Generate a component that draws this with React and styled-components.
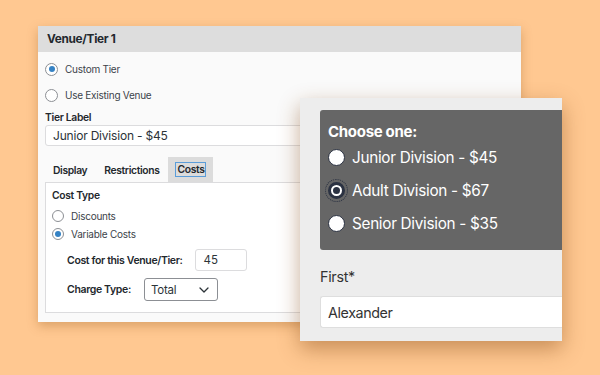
import React from "react"
import styled, { createGlobalStyle } from "styled-components"

const GlobalStyle = createGlobalStyle`
  html, body {
    margin: 0;
    padding: 0;
    background: #ffc891;
  }
  body {
    font-family: Inter, "Noto Sans", sans-serif;
    -webkit-font-smoothing: antialiased;
  }
`

const Stage = styled.div`
  position: relative;
  width: 600px;
  height: 375px;
  overflow: hidden;
  background: #ffc891;
`

/* ---------- admin window (back) ---------- */

const AdminWindow = styled.div`
  position: absolute;
  left: 38px;
  top: 26px;
  width: 483px;
  height: 296px;
  background: #fafafa;
  box-shadow: 0 4px 10px rgba(150, 90, 30, 0.35);
  display: flex;
  flex-direction: column;
`

const WindowHeader = styled.div`
  height: 26px;
  flex: none;
  display: flex;
  align-items: center;
  padding-left: 9px;
  background: #dddddd;
  color: #23282d;
  font-size: 11.8px;
  letter-spacing: -0.3px;
  font-weight: 700;
`

const WindowBody = styled.div`
  padding: 4px 7px 0;
  display: flex;
  flex-direction: column;
`

const RadioRow = styled.label`
  display: flex;
  align-items: center;
  gap: ${(p) => p.$gap || 7}px;
  height: ${(p) => p.$h || 26}px;
  margin-top: ${(p) => p.$mt || 0}px;
  color: #3c434a;
  font-size: 10px;
  letter-spacing: -0.25px;
`

const WpRadio = styled.span`
  width: ${(p) => p.$size}px;
  height: ${(p) => p.$size}px;
  box-sizing: border-box;
  border-radius: 50%;
  border: 1px solid #8c8f94;
  background: #fff;
  display: flex;
  align-items: center;
  justify-content: center;
  flex: none;

  &::after {
    content: "";
    display: ${(p) => (p.$checked ? "block" : "none")};
    width: 6px;
    height: 6px;
    border-radius: 50%;
    background: #3582c4;
  }
`

const FieldLabel = styled.div`
  margin-top: 2px;
  line-height: 14px;
  font-size: 10.3px;
  letter-spacing: -0.3px;
  font-weight: 600;
  color: #23282d;
`

const TextInput = styled.div`
  margin-top: 1px;
  height: 21px;
  box-sizing: border-box;
  border: 1px solid #dcdcde;
  border-radius: 3px;
  background: #fff;
  display: flex;
  align-items: center;
  padding-left: 7px;
  font-size: 12px;
  letter-spacing: -0.2px;
  color: #2c3338;
`

const Tabs = styled.div`
  margin-top: 11px;
  display: flex;
  gap: 1px;
`

const Tab = styled.div`
  height: 25px;
  padding: 0 8px;
  display: flex;
  align-items: center;
  font-size: 10.3px;
  letter-spacing: -0.35px;
  font-weight: 600;
  color: #23282d;
  background: ${(p) => (p.$active ? "#dcdcdc" : "transparent")};
`

const FocusText = styled.span`
  outline: 1px solid #5b9dd9;
  padding: 0 1px;
  line-height: 13px;
`

const TabPanel = styled.div`
  height: 131px;
  box-sizing: border-box;
  border: 1px solid #dcdcde;
  background: #fff;
  padding: 5px 6px 0;
  display: flex;
  flex-direction: column;
`

const SectionTitle = styled.div`
  line-height: 14px;
  font-size: 10.3px;
  letter-spacing: -0.3px;
  font-weight: 600;
  color: #23282d;
`

const FieldRow = styled.div`
  display: flex;
  align-items: center;
  gap: ${(p) => p.$gap}px;
  margin-top: ${(p) => p.$mt}px;
  padding-left: 15px;
  font-size: 10.5px;
  letter-spacing: -0.35px;
  font-weight: 600;
  color: #23282d;
`

const SmallInput = styled.div`
  width: 52px;
  height: 22px;
  box-sizing: border-box;
  border: 1px solid #dcdcde;
  border-radius: 3px;
  padding-left: 8px;
  display: flex;
  align-items: center;
  font-size: 11.5px;
  letter-spacing: 0;
  font-weight: 400;
  color: #2c3338;
`

const Select = styled.div`
  width: 74px;
  height: 23px;
  box-sizing: border-box;
  border: 1px solid #8c8f94;
  border-radius: 3px;
  padding: 0 8px 0 6px;
  display: flex;
  align-items: center;
  justify-content: space-between;
  font-size: 11.5px;
  letter-spacing: -0.2px;
  font-weight: 400;
  color: #2c3338;
`

/* ---------- front-end form window ---------- */

const FormWindow = styled.div`
  position: absolute;
  left: 300px;
  top: 98px;
  width: 262px;
  height: 243px;
  box-sizing: border-box;
  background: #ededed;
  box-shadow: 0 8px 20px rgba(130, 70, 20, 0.45);
  overflow: hidden;
  padding: 12px 0 0 20px;
  display: flex;
  flex-direction: column;
`

const ChoiceBox = styled.div`
  width: 260px;
  height: 140px;
  box-sizing: border-box;
  background: #666666;
  border-radius: 3px 0 0 3px;
  padding: 12px 8px 0;
  color: #fff;
`

const ChoiceTitle = styled.div`
  font-size: 15px;
  letter-spacing: -0.3px;
  font-weight: 700;
  line-height: 19px;
`

const Choice = styled.div`
  display: flex;
  align-items: center;
  gap: 7px;
  height: 33px;
  font-size: 15.3px;
  letter-spacing: -0.3px;
`

const BigRadio = styled.span`
  position: relative;
  width: 17px;
  height: 17px;
  box-sizing: border-box;
  border-radius: 50%;
  border: ${(p) => (p.$checked ? 3 : 1.5)}px solid #2b3242;
  background: #fff;
  flex: none;
  display: flex;
  align-items: center;
  justify-content: center;

  &::after {
    content: "";
    display: ${(p) => (p.$checked ? "block" : "none")};
    width: 7px;
    height: 7px;
    border-radius: 50%;
    background: #2b3242;
  }

  &::before {
    content: "";
    display: ${(p) => (p.$checked ? "block" : "none")};
    position: absolute;
    inset: -6px;
    border-radius: 50%;
    border: 1px dotted #2b3242;
  }
`

const FormLabel = styled.div`
  margin-top: 17px;
  font-size: 14.3px;
  letter-spacing: -0.3px;
  line-height: 20px;
  color: #333;
`

const FormInput = styled.div`
  margin-top: 9px;
  height: 32px;
  box-sizing: border-box;
  border: 1px solid #dedede;
  border-right: none;
  border-radius: 3px 0 0 3px;
  background: #fff;
  padding-left: 7px;
  display: flex;
  align-items: center;
  font-size: 14.3px;
  letter-spacing: -0.4px;
  color: #333;
`

const Chevron = () => (
  <svg width="10" height="6" viewBox="0 0 10 6" fill="none">
    <path d="M1 1l4 4 4-4" stroke="#2c3338" strokeWidth="1.3" strokeLinecap="round" strokeLinejoin="round" />
  </svg>
)

export default function App() {
  return (
    <Stage>
      <GlobalStyle />
      <AdminWindow>
        <WindowHeader>Venue/Tier 1</WindowHeader>
        <WindowBody>
          <RadioRow>
            <WpRadio $size={13} $checked />
            Custom Tier
          </RadioRow>
          <RadioRow>
            <WpRadio $size={13} />
            Use Existing Venue
          </RadioRow>
          <FieldLabel>Tier Label</FieldLabel>
          <TextInput>Junior Division - $45</TextInput>
          <Tabs>
            <Tab>Display</Tab>
            <Tab>Restrictions</Tab>
            <Tab $active>
              <FocusText>Costs</FocusText>
            </Tab>
          </Tabs>
          <TabPanel>
            <SectionTitle>Cost Type</SectionTitle>
            <RadioRow $h={19} $mt={4} $gap={7}>
              <WpRadio $size={12} />
              Discounts
            </RadioRow>
            <RadioRow $h={18} $gap={7}>
              <WpRadio $size={12} $checked />
              Variable Costs
            </RadioRow>
            <FieldRow $gap={12} $mt={6}>
              Cost for this Venue/Tier:
              <SmallInput>45</SmallInput>
            </FieldRow>
            <FieldRow $gap={13} $mt={7}>
              Charge Type:
              <Select>
                Total
                <Chevron />
              </Select>
            </FieldRow>
          </TabPanel>
        </WindowBody>
      </AdminWindow>

      <FormWindow>
        <ChoiceBox>
          <ChoiceTitle>Choose one:</ChoiceTitle>
          <Choice>
            <BigRadio />
            Junior Division - $45
          </Choice>
          <Choice>
            <BigRadio $checked />
            Adult Division - $67
          </Choice>
          <Choice>
            <BigRadio />
            Senior Division - $35
          </Choice>
        </ChoiceBox>
        <FormLabel>First*</FormLabel>
        <FormInput>Alexander</FormInput>
      </FormWindow>
    </Stage>
  )
}
